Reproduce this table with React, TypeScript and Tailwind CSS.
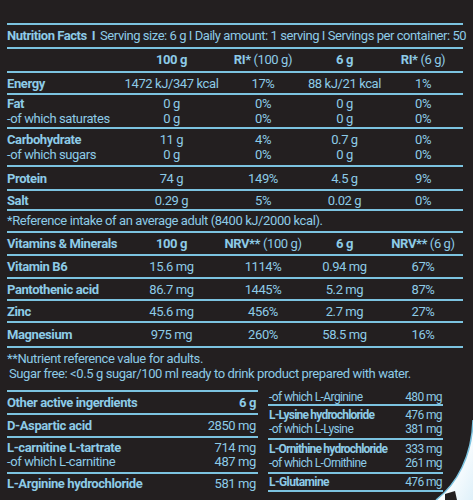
import React from 'react'

const font = { fontFamily: 'Roboto, "Liberation Sans", sans-serif' }

const cols = 'grid grid-cols-[116px_97px_86px_77px_80px] items-center'

type Row = { h: string; lines: { label: string; bold?: boolean; v: string[] }[] }

const nutrition: Row[] = [
  { h: 'h-[22px]', lines: [{ label: 'Energy', bold: true, v: ['1472 kJ/347 kcal', '17%', '88 kJ/21 kcal', '1%'] }] },
  {
    h: 'h-[34px]',
    lines: [
      { label: 'Fat', bold: true, v: ['0 g', '0%', '0 g', '0%'] },
      { label: '-of which saturates', v: ['0 g', '0%', '0 g', '0%'] },
    ],
  },
  {
    h: 'h-[38px]',
    lines: [
      { label: 'Carbohydrate', bold: true, v: ['11 g', '4%', '0.7 g', '0%'] },
      { label: '-of which sugars', v: ['0 g', '0%', '0 g', '0%'] },
    ],
  },
  { h: 'h-[24px]', lines: [{ label: 'Protein', bold: true, v: ['74 g', '149%', '4.5 g', '9%'] }] },
  { h: 'h-[20px]', lines: [{ label: 'Salt', bold: true, v: ['0.29 g', '5%', '0.02 g', '0%'] }] },
]

const vitamins: Row[] = [
  { h: 'h-[23px]', lines: [{ label: 'Vitamin B6', bold: true, v: ['15.6 mg', '1114%', '0.94 mg', '67%'] }] },
  { h: 'h-[22px]', lines: [{ label: 'Pantothenic acid', bold: true, v: ['86.7 mg', '1445%', '5.2 mg', '87%'] }] },
  { h: 'h-[22px]', lines: [{ label: 'Zinc', bold: true, v: ['45.6 mg', '456%', '2.7 mg', '27%'] }] },
  { h: 'h-[25px]', lines: [{ label: 'Magnesium', bold: true, v: ['975 mg', '260%', '58.5 mg', '16%'] }] },
]

const TableRows = ({ rows }: { rows: Row[] }) => (
  <>
    {rows.map((r, i) => (
      <div key={i} className={`${r.h} flex flex-col justify-center border-b-2 border-[#7cc3e0]`}>
        {r.lines.map((l, j) => (
          <div key={j} className={`${cols} leading-[15px]`}>
            <span className={l.bold ? 'font-bold' : ''}>{l.label}</span>
            {l.v.map((v, k) => (
              <span key={k} className="text-center">
                {v}
              </span>
            ))}
          </div>
        ))}
      </div>
    ))}
  </>
)

const App: React.FC = () => {
  return (
    <div
      className="relative w-[473px] h-[500px] overflow-hidden whitespace-nowrap bg-[#231f20] text-[#8dcbe7] text-[13px] tracking-[-0.4px] pt-[23px] px-[7px]"
      style={font}
    >
      <div className="w-[456px] border-t-2 border-[#7cc3e0]">
        <div className="h-[24px] flex items-center border-b-2 border-[#7cc3e0] text-[13px] tracking-[-0.45px]">
          <span className="font-bold">Nutrition Facts</span>
          <span className="font-bold mx-[5px]">I</span>
          <span>Serving size: 6 g I Daily amount: 1 serving I Servings per container: 50</span>
        </div>
        <div className={`${cols} h-[24px] border-b-2 border-[#7cc3e0]`}>
          <span />
          <span className="text-center font-bold">100 g</span>
          <span className="text-center"><b>RI*</b> (100 g)</span>
          <span className="text-center font-bold">6 g</span>
          <span className="text-center"><b>RI*</b> (6 g)</span>
        </div>
        <TableRows rows={nutrition} />
        <div className="h-[22px] flex items-center border-b-2 border-[#7cc3e0]">
          *Reference intake of an average adult (8400 kJ/2000 kcal).
        </div>
        <div className={`${cols} h-[23px] border-b-2 border-[#7cc3e0]`}>
          <span className="font-bold">Vitamins &amp; Minerals</span>
          <span className="text-center font-bold">100 g</span>
          <span className="text-center"><b>NRV**</b> (100 g)</span>
          <span className="text-center font-bold">6 g</span>
          <span className="text-center"><b>NRV**</b> (6 g)</span>
        </div>
        <TableRows rows={vitamins} />
        <div className="pt-[3px] leading-[15px]">
          <div>**Nutrient reference value for adults.</div>
          <div className="pl-[2px]">Sugar free: &lt;0.5 g sugar/100 ml ready to drink product prepared with water.</div>
        </div>
      </div>

      <div className="mt-[9px] flex gap-[10px]">
        <div className="w-[251px] border-t-2 border-[#7cc3e0]">
          <div className="h-[23px] flex items-center justify-between pr-[2px] border-b-2 border-[#7cc3e0] font-bold">
            <span>Other active ingerdients</span>
            <span>6 g</span>
          </div>
          <div className="h-[23px] flex items-center justify-between pr-[2px] border-b-2 border-[#7cc3e0]">
            <span className="font-bold">D-Aspartic acid</span>
            <span>2850 mg</span>
          </div>
          <div className="h-[36px] flex flex-col justify-center pr-[2px] border-b-2 border-[#7cc3e0] leading-[14px]">
            <div className="flex justify-between">
              <span className="font-bold">L-carnitine L-tartrate</span>
              <span>714 mg</span>
            </div>
            <div className="flex justify-between">
              <span>-of which L-carnitine</span>
              <span>487 mg</span>
            </div>
          </div>
          <div className="h-[20px] flex items-center justify-between pr-[2px]">
            <span className="font-bold">L-Arginine hydrochloride</span>
            <span>581 mg</span>
          </div>
        </div>

        <div className="w-[175px] leading-[14px] text-[12px] tracking-[-0.6px]">
          <div className="h-[16px] flex items-center justify-between px-[1px] border-b-2 border-[#7cc3e0]">
            <span>-of which L-Arginine</span>
            <span>480 mg</span>
          </div>
          <div className="h-[34px] flex flex-col justify-center px-[1px] border-b-2 border-[#7cc3e0]">
            <div className="flex justify-between">
              <span className="font-bold tracking-[-0.8px]">L-Lysine hydrochloride</span>
              <span>476 mg</span>
            </div>
            <div className="flex justify-between">
              <span>-of which L-Lysine</span>
              <span>381 mg</span>
            </div>
          </div>
          <div className="h-[34px] flex flex-col justify-center px-[1px] border-b-2 border-[#7cc3e0]">
            <div className="flex justify-between">
              <span className="font-bold tracking-[-0.8px]">L-Ornithine hydrochloride</span>
              <span>333 mg</span>
            </div>
            <div className="flex justify-between">
              <span>-of which L-Ornithine</span>
              <span>261 mg</span>
            </div>
          </div>
          <div className="h-[18px] flex items-center justify-between px-[1px] border-b-2 border-[#7cc3e0]">
            <span className="font-bold">L-Glutamine</span>
            <span>476 mg</span>
          </div>
        </div>
      </div>

      <svg className="absolute right-0 bottom-0" width="40" height="82" viewBox="0 0 40 82">
        <defs>
          <linearGradient id="wave" x1="0" y1="0" x2="1" y2="1">
            <stop offset="0" stopColor="#a9d8ee" />
            <stop offset="0.5" stopColor="#ffffff" />
            <stop offset="1" stopColor="#dff1fa" />
          </linearGradient>
        </defs>
        <path d="M40 2 C39 38 24 66 3 82 L40 82 Z" fill="url(#wave)" />
        <path d="M40 2 C39 38 24 66 3 82" fill="none" stroke="#7cc3e0" strokeWidth="1.5" />
        <path d="M12 76 L22 73 L24 82 L12 82 Z" fill="#231f20" />
      </svg>
    </div>
  )
}

export default App
